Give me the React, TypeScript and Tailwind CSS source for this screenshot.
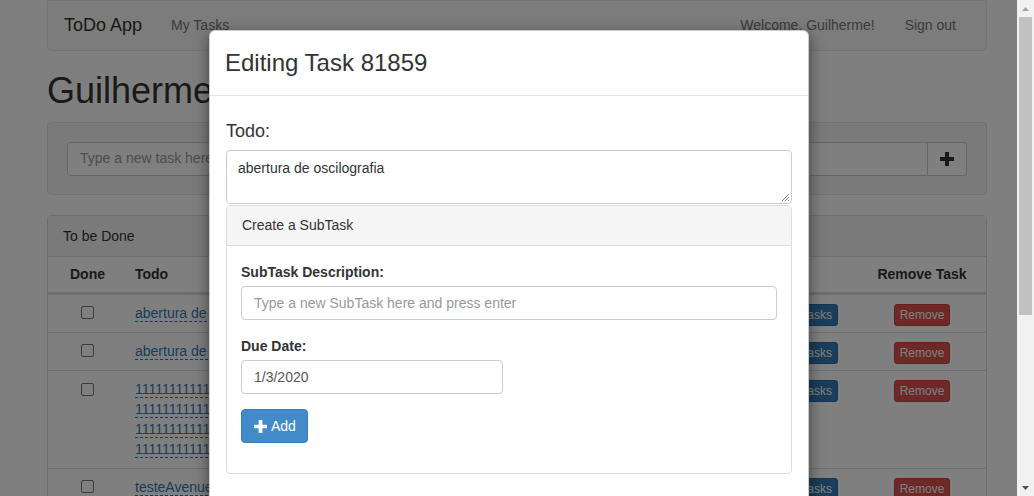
import React from "react";

const font = { fontFamily: '"Liberation Sans", Arial, sans-serif' };

function Check() {
  return <span className="inline-block w-[13px] h-[13px] rounded-[2px] border border-[#767676] bg-white" />;
}

function TaskLink({ children }: { children: React.ReactNode }) {
  return <span className="text-[#337ab7] border-b border-dashed border-[#0088cc]">{children}</span>;
}

function Buttons() {
  return (
    <>
      <div className="flex justify-end items-start pt-[9px] pr-[20px]">
        <span className="bg-[#337ab7] border border-[#2e6da4] text-white text-[12px] leading-[20px] px-[5px] rounded-[3px]">
          SubTasks
        </span>
      </div>
      <div className="flex justify-center items-start pt-[9px]">
        <span className="bg-[#d9534f] border border-[#d43f3a] text-white text-[12px] leading-[20px] px-[5px] rounded-[3px]">
          Remove
        </span>
      </div>
    </>
  );
}

function Row({ text }: { text: string }) {
  return (
    <div className="grid grid-cols-[79px_1fr_160px_128px] border-t border-[#ddd] text-[14px] leading-[20px]">
      <div className="flex justify-center pt-[11px]">
        <Check />
      </div>
      <div className="pt-[8px] pb-[9px] px-[8px] whitespace-nowrap overflow-hidden">
        <TaskLink>{text}</TaskLink>
      </div>
      <Buttons />
    </div>
  );
}

function Page() {
  return (
    <div className="w-[1017px] bg-white text-[#333]">
      <div className="ml-[47px] w-[940px] h-[51px] bg-[#f8f8f8] border border-[#e7e7e7] rounded-b-[4px] flex items-center">
        <span className="ml-[16px] text-[18px]">ToDo App</span>
        <span className="ml-[29px] text-[14px] text-[#777]">My Tasks</span>
        <span className="ml-auto text-[14px] text-[#777]">Welcome, Guilherme!</span>
        <span className="ml-[30px] mr-[30px] text-[14px] text-[#777]">Sign out</span>
      </div>
      <h1 className="ml-[47px] mt-[20px] text-[36px] leading-[40px] text-[#333]">Guilherme's Tasks</h1>
      <div className="ml-[47px] mt-[11px] w-[940px] h-[73px] bg-[#f5f5f5] border border-[#e3e3e3] rounded-[4px] flex items-center px-[19px]">
        <div className="flex-1 h-[34px] bg-white border border-[#ccc] rounded-l-[4px] flex items-center px-[12px] text-[14px] text-[#999]">
          Type a new task here and press enter
        </div>
        <div className="w-[39px] h-[34px] bg-white border border-[#ccc] border-l-0 rounded-r-[4px] flex items-center justify-center">
          <svg width="14" height="14" viewBox="0 0 14 14">
            <path d="M5 0h4v5h5v4H9v5H5V9H0V5h5z" fill="#333" />
          </svg>
        </div>
      </div>
      <div className="ml-[47px] mt-[20px] w-[940px] border border-[#ddd] rounded-[4px]">
        <div className="h-[41px] bg-[#f5f5f5] border-b border-[#ddd] flex items-center px-[15px] text-[14px]">
          To be Done
        </div>
        <div className="grid grid-cols-[79px_1fr_160px_128px] border-b-2 border-[#ddd] h-[37px] items-center text-[14px] font-bold">
          <div className="text-center">Done</div>
          <div className="pl-[8px]">Todo</div>
          <div />
          <div className="text-center">Remove Task</div>
        </div>
        <Row text="abertura de oscilografia" />
        <Row text="abertura de oscilografia 2" />
        <div className="grid grid-cols-[79px_1fr_160px_128px] border-t border-[#ddd] text-[14px] leading-[20px]">
          <div className="flex justify-center pt-[12px]">
            <Check />
          </div>
          <div className="pt-[8px] pb-[9px] px-[8px] w-[90px]">
            {[0, 1, 2, 3].map((i) => (
              <div key={i} className="whitespace-nowrap overflow-hidden">
                <TaskLink>111111111111111111</TaskLink>
              </div>
            ))}
          </div>
          <Buttons />
        </div>
        <Row text="testeAvenue" />
      </div>
    </div>
  );
}

function Modal() {
  return (
    <div className="absolute left-[209px] top-[30px] w-[600px] bg-white border border-[rgba(0,0,0,0.2)] rounded-[6px] shadow-[0_5px_15px_rgba(0,0,0,0.5)] text-[#333]">
      <div className="h-[65px] border-b border-[#e5e5e5] flex items-center px-[15px]">
        <span className="text-[24px] leading-[26px]">Editing Task 81859</span>
      </div>
      <div className="px-[16px] pt-[24px] pb-[15px]">
        <div className="text-[18px] leading-[22px]">Todo:</div>
        <div className="mt-[8px] h-[54px] border border-[#ccc] rounded-[4px] px-[11px] pt-[7px] text-[14px] leading-[20px] relative">
          abertura de oscilografia
          <svg className="absolute right-[1px] bottom-[1px]" width="9" height="9" viewBox="0 0 9 9">
            <path d="M8 1L1 8M8 4L4 8M8 7L7 8" stroke="#888" strokeWidth="1" />
          </svg>
        </div>
        <div className="mt-[1px] border border-[#ddd] rounded-[4px]">
          <div className="h-[40px] bg-[#f5f5f5] border-b border-[#ddd] flex items-center px-[15px] text-[14px]">
            Create a SubTask
          </div>
          <div className="px-[14px] pt-[16px] pb-[30px]">
            <div className="text-[14px] leading-[20px] font-bold">SubTask Description:</div>
            <div className="mt-[4px] h-[34px] border border-[#ccc] rounded-[4px] flex items-center px-[12px] text-[14px] text-[#999]">
              Type a new SubTask here and press enter
            </div>
            <div className="mt-[16px] text-[14px] leading-[20px] font-bold">Due Date:</div>
            <div className="mt-[4px] w-[262px] h-[34px] border border-[#ccc] rounded-[4px] flex items-center px-[12px] text-[14px] text-[#555]">
              1/3/2020
            </div>
            <div className="mt-[15px] inline-flex items-center gap-[4px] h-[34px] pl-[12px] pr-[11px] bg-[#428bca] border border-[#357ebd] rounded-[4px] text-white text-[14px]">
              <svg width="13" height="13" viewBox="0 0 14 14">
                <path d="M5 0h4v5h5v4H9v5H5V9H0V5h5z" fill="#fff" />
              </svg>
              Add
            </div>
          </div>
        </div>
        <div className="h-[40px]" />
      </div>
    </div>
  );
}

function Scrollbar() {
  return (
    <div className="w-[17px] h-full bg-[#f1f1f1] flex flex-col items-center">
      <div className="h-[17px] flex items-center justify-center">
        <svg width="7" height="4" viewBox="0 0 7 4">
          <path d="M0 4L3.5 0L7 4z" fill="#a3a3a3" />
        </svg>
      </div>
      <div className="w-[13px] h-[298px] bg-[#c1c1c1]" />
      <div className="flex-1" />
      <div className="h-[17px] flex items-center justify-center">
        <svg width="7" height="4" viewBox="0 0 7 4">
          <path d="M0 0L7 0L3.5 4z" fill="#505050" />
        </svg>
      </div>
    </div>
  );
}

export default function App() {
  return (
    <div className="w-[1034px] h-[496px] flex overflow-hidden bg-white" style={font}>
      <div className="relative w-[1017px] h-full overflow-hidden">
        <Page />
        <div className="absolute inset-0 bg-black/50" />
        <Modal />
      </div>
      <Scrollbar />
    </div>
  );
}
